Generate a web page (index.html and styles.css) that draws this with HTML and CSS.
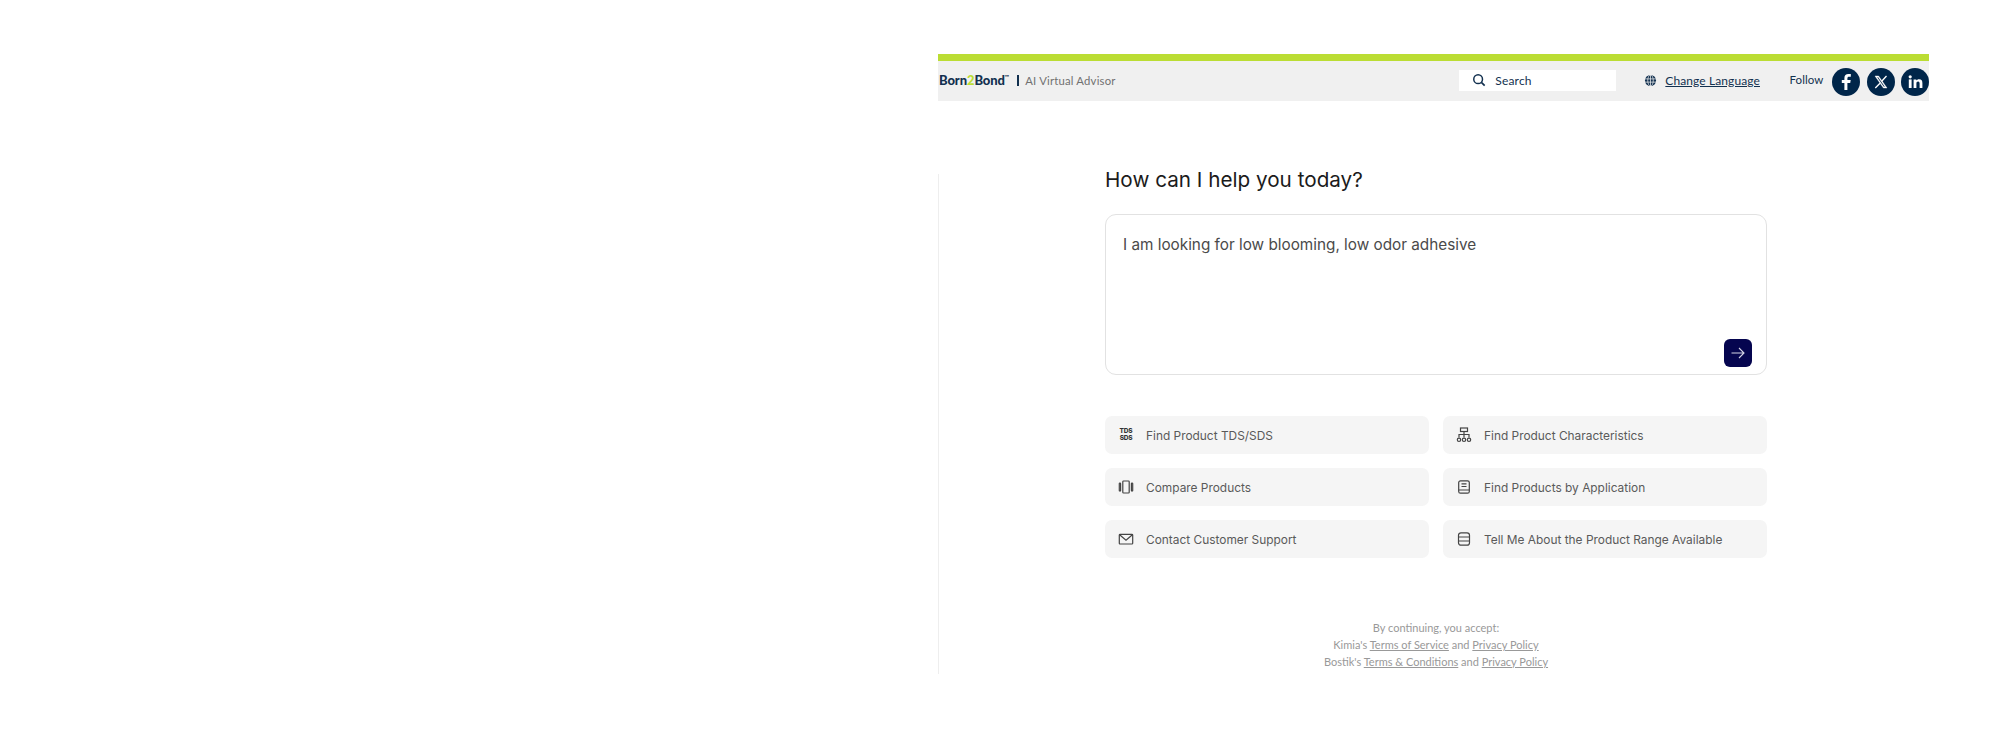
FILE: index.html
```html
<!DOCTYPE html>
<html lang="en">
<head>
<meta charset="utf-8">
<title>Born2Bond AI Virtual Advisor</title>
<link rel="stylesheet" href="styles.css">
</head>
<body>
<div class="app">
  <header class="header">
    <div class="accent"></div>
    <div class="bar">
      <div class="brand">
        <span class="logo">Born<span class="logo-two">2</span>Bond<sup class="tm">™</sup></span>
        <span class="sep"></span>
        <span class="advisor">AI Virtual Advisor</span>
      </div>
      <div class="search">
        <svg class="search-icon" viewBox="0 0 16 16" width="14" height="14"><circle cx="7" cy="7" r="5" fill="none" stroke="#12304f" stroke-width="1.7"/><path d="M10.7 10.7 14.5 14.5" stroke="#12304f" stroke-width="1.9" fill="none"/></svg>
        <span>Search</span>
      </div>
      <div class="lang">
        <svg viewBox="0 0 16 16" width="13" height="13"><circle cx="8" cy="8" r="6.8" fill="#12304f"/><path d="M1 6h14M1 10h14M8 1v14" stroke="#f0f0f0" stroke-width=".9" fill="none"/><ellipse cx="8" cy="8" rx="3.4" ry="6.8" fill="none" stroke="#f0f0f0" stroke-width=".9"/></svg>
        <a class="lang-link">Change Language</a>
      </div>
      <div class="follow">
        <span class="follow-label">Follow</span>
        <span class="social">
          <svg viewBox="0 0 28 28" width="28" height="28"><circle cx="14" cy="14" r="14" fill="#00264a"/><path d="M15.4 22v-7h2.800l.5-3h-3.300v-1.700c0-1 .4-1.600 1.700-1.600h1.700V6.100c-.5-.1-1.400-.2-2.400-.2-2.500 0-4 1.500-4 4.100V12H9.800v3h2.600v7z" fill="#fff"/></svg>
        </span>
        <span class="social">
          <svg viewBox="0 0 28 28" width="28" height="28"><circle cx="14" cy="14" r="14" fill="#00264a"/><path d="M8 8h3.600l8.400 12h-3.600z" fill="#fff" stroke="#fff" stroke-width=".4"/><path d="M19.500 8 14.700 13.300M13 15.200 8.300 20" stroke="#fff" stroke-width="1.300" fill="none"/><path d="M10.200 9.200h.9l6.700 9.600h-.9z" fill="#00264a"/></svg>
        </span>
        <span class="social">
          <svg viewBox="0 0 28 28" width="28" height="28"><circle cx="14" cy="14" r="14" fill="#00264a"/><rect x="7.800" y="11.400" width="2.800" height="8.600" fill="#fff"/><circle cx="9.200" cy="8.800" r="1.600" fill="#fff"/><path d="M12.600 11.400h2.700v1.200c.5-.8 1.500-1.400 2.800-1.400 2.500 0 3.300 1.600 3.300 4V20h-2.800v-4.200c0-1.200-.3-2.200-1.500-2.200s-1.700.9-1.700 2.200V20h-2.800z" fill="#fff"/></svg>
        </span>
      </div>
    </div>
  </header>

  <main class="main">
    <div class="content">
      <h1 class="title">How can I help you today?</h1>
      <div class="prompt">
        <p class="prompt-text">I am looking for low blooming, low odor adhesive</p>
        <button class="send" type="button" aria-label="Send">
          <svg viewBox="0 0 16 16" width="16" height="16"><path d="M1.500 8h12.500M9 3l5 5-5 5" fill="none" stroke="#d5d5e6" stroke-width="1.100"/></svg>
        </button>
      </div>
      <div class="actions">
        <div class="action">
          <span class="icon icon-text">TDS<br>SDS</span>
          <span>Find Product TDS/SDS</span>
        </div>
        <div class="action">
          <svg class="icon" viewBox="0 0 16 16" fill="none" stroke="#444" stroke-width="1.200"><rect x="4.500" y="1" width="7" height="3.500"/><path d="M8 4.500V10.500M3 10.500V7.500h10v3"/><circle cx="3" cy="12.800" r="1.700"/><circle cx="8" cy="12.800" r="1.700"/><circle cx="13" cy="12.800" r="1.700"/></svg>
          <span>Find Product Characteristics</span>
        </div>
        <div class="action">
          <svg class="icon" viewBox="0 0 16 16" fill="none" stroke="#444" stroke-width="1.200"><rect x="4.800" y="2" width="6.400" height="12" rx=".8"/><rect x="1.300" y="4" width="1.300" height="8" rx=".6"/><rect x="13.400" y="4" width="1.300" height="8" rx=".6"/></svg>
          <span>Compare Products</span>
        </div>
        <div class="action">
          <svg class="icon" viewBox="0 0 16 16" fill="none" stroke="#444" stroke-width="1.200"><rect x="2.700" y="1.800" width="10.600" height="12.400" rx="1.800"/><path d="M5.500 4.800h5M5.500 7.500h5M2.700 11h10.600"/></svg>
          <span>Find Products by Application</span>
        </div>
        <div class="action">
          <svg class="icon" viewBox="0 0 16 16" fill="none" stroke="#444" stroke-width="1.200"><rect x="1.300" y="3.300" width="13.400" height="9.700" rx=".8"/><path d="M1.600 3.800 8 9.200l6.400-5.400"/></svg>
          <span>Contact Customer Support</span>
        </div>
        <div class="action">
          <svg class="icon" viewBox="0 0 16 16" fill="none" stroke="#444" stroke-width="1.200"><rect x="2.500" y="1.800" width="11" height="12.400" rx="2.500"/><path d="M2.500 6h11M2.500 10h11"/></svg>
          <span>Tell Me About the Product Range Available</span>
        </div>
      </div>
      <footer class="legal">
        <p>By continuing, you accept:</p>
        <p>Kimia's <a>Terms of Service</a> and <a>Privacy Policy</a></p>
        <p>Bostik's <a>Terms &amp; Conditions</a> and <a>Privacy Policy</a></p>
      </footer>
    </div>
  </main>
</div>
</body>
</html>
```
FILE: styles.css
```css
* { box-sizing: border-box; }
html, body { margin: 0; height: 100%; background: #fff; }
body { font-family: "Inter", "Liberation Sans", sans-serif; overflow: hidden; }
p, h1 { margin: 0; }

.app { width: 991px; margin: 54px 0 0 938px; }

.accent { height: 7px; background: #bbdd33; }
.bar {
  height: 40px;
  background: #f0f0f0;
  display: flex;
  align-items: center;
  padding-left: 1px;
}
.brand { display: flex; align-items: center; width: 527px; padding-bottom: 2px; }
.logo { font-family: "Lato", sans-serif; font-weight: 900; font-size: 13px; color: #12304f; letter-spacing: -.1px; }
.logo-two { color: #bbdd33; }
.tm { font-size: 6px; line-height: 0; vertical-align: 6px; font-weight: 700; }
.sep { width: 2px; height: 11px; background: #12304f; margin: 0 6px 0 8px; }
.advisor { font-family: "Lato", sans-serif; font-size: 11.300px; color: #707070; letter-spacing: .2px; }

.search {
  width: 159px; height: 21px; background: #fff; margin-bottom: 2px;
  display: flex; align-items: center; gap: 9px; padding-left: 13px;
  font-family: "Lato", sans-serif; font-size: 12px; color: #12304f; letter-spacing: .2px;
}
.lang { display: flex; align-items: center; gap: 8px; margin: 0 0 2px 28px; width: 146px; font-family: "Lato", sans-serif; font-size: 12px; color: #12304f; letter-spacing: .1px; }
.lang-link { text-decoration: underline; }

.follow { display: flex; align-items: center; gap: 6.500px; margin-left: 1px; font-family: "Lato", sans-serif; font-size: 11.500px; color: #12304f; letter-spacing: .1px; }
.follow-label { margin-right: 2px; padding-bottom: 3px; }
.social { display: block; width: 28px; height: 28px; margin-top: 2px; }
.social svg { display: block; }

.main { display: flow-root; border-left: 1px solid #eeeeee; margin-top: 73px; height: 500px; padding-left: 166px; }
.content { width: 662px; }
.title { font-size: 20.700px; font-weight: 400; color: #1b1b1b; line-height: 26px; margin-top: -7px; }
.prompt {
  height: 161px; margin-top: 21px;
  border: 1px solid #e2e2e2; border-radius: 11px; background: #fff;
  padding: 20px 17px 14px; position: relative;
}
.prompt-text { font-size: 15.300px; line-height: 19px; color: #4a4a4a; }
.send {
  position: absolute; right: 14px; bottom: 7px;
  width: 28px; height: 28px; border: 0; border-radius: 6px; padding: 0;
  background: #05054f; display: flex; align-items: center; justify-content: center;
}

.actions { display: grid; grid-template-columns: 324px 324px; column-gap: 14px; row-gap: 14px; margin-top: 41px; }
.action {
  height: 38px; border-radius: 7px; background: #f5f5f5;
  display: flex; align-items: center; gap: 12px; padding-left: 13px;
  font-size: 11.900px; color: #5a5a5a;
}
.icon { flex: none; width: 16px; height: 16px; }
.icon-text { font-size: 6.500px; font-weight: 800; line-height: 7px; letter-spacing: -.2px; color: #333; display: block; text-align: center; height: auto; }

.legal { margin-top: 61px; text-align: center; font-family: "Lato", sans-serif; font-size: 11px; line-height: 17px; color: #999; }
.legal a { text-decoration: underline; }
```
